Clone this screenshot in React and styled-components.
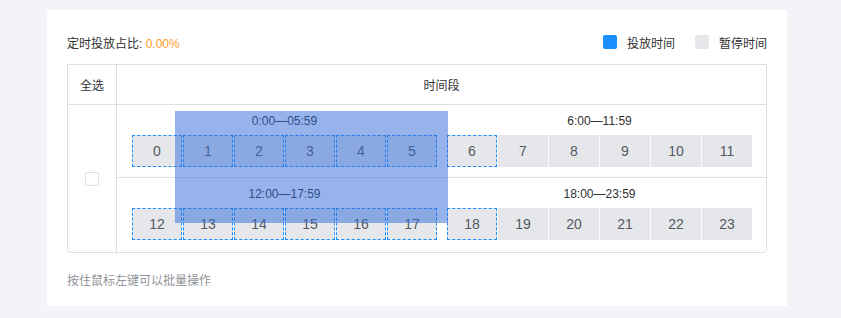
import React from 'react';
import styled, { createGlobalStyle } from 'styled-components';

const GlobalStyle = createGlobalStyle`
  body {
    margin: 0;
    background: #f3f4f8;
    font-family: "Liberation Sans", "Noto Sans CJK SC", sans-serif;
  }
`;

const Card = styled.div`
  box-sizing: border-box;
  width: 740px;
  height: 296px;
  margin: 10px 0 0 47px;
  padding: 20px 20px 15px;
  background: #fff;
`;

const TopBar = styled.div`
  display: flex;
  align-items: center;
  justify-content: space-between;
  height: 24px;
  margin-bottom: 10px;
  font-size: 12px;
  color: #303133;
`;

const Ratio = styled.span`
  color: #ff9a2e;
`;

const Legend = styled.div`
  display: flex;
  align-items: center;
  gap: 20px;
`;

const LegendItem = styled.div`
  display: flex;
  align-items: center;
  gap: 10px;
`;

const Swatch = styled.span`
  width: 14px;
  height: 14px;
  border-radius: 2px;
  background: ${p => (p.$on ? '#1890ff' : '#e6e7eb')};
`;

const Table = styled.div`
  box-sizing: border-box;
  width: 700px;
  border: 1px solid #dcdfe6;
  border-radius: 0 0 4px 4px;
  font-size: 12px;
  color: #303133;
`;

const HeadRow = styled.div`
  display: flex;
  height: 39px;
  border-bottom: 1px solid #dcdfe6;
`;

const FirstCol = styled.div`
  width: 48px;
  flex: none;
  display: flex;
  align-items: center;
  justify-content: center;
  border-right: 1px solid #dcdfe6;
`;

const HeadTitle = styled.div`
  flex: 1;
  display: flex;
  align-items: center;
  justify-content: center;
`;

const BodyRow = styled.div`
  display: flex;
`;

const Checkbox = styled.span`
  box-sizing: border-box;
  width: 14px;
  height: 14px;
  border: 1px solid #dcdfe6;
  border-radius: 2px;
  background: #fff;
`;

const Grid = styled.div`
  position: relative;
  flex: 1;
`;

const HalfDay = styled.div`
  display: flex;
  gap: 10px;
  padding: 6px 15px ${p => (p.$last ? '12px' : '10px')};
  border-bottom: ${p => (p.$last ? 'none' : '1px solid #dcdfe6')};
`;

const Block = styled.div`
  width: 305px;
`;

const BlockLabel = styled.div`
  height: 20px;
  line-height: 20px;
  margin-bottom: 4px;
  text-align: center;
  font-size: 12px;
  color: #303133;
`;

const Cells = styled.div`
  display: flex;
  gap: 1px;
`;

const Cell = styled.div`
  box-sizing: border-box;
  width: 50px;
  height: 32px;
  display: flex;
  align-items: center;
  justify-content: center;
  background: #e6e7eb;
  font-size: 14px;
  color: #555960;
  border: ${p => (p.$hover ? '1px dashed #1890ff' : 'none')};
`;

const Selection = styled.div`
  position: absolute;
  left: 58px;
  top: 6px;
  width: 273px;
  height: 112px;
  background: rgba(45, 105, 215, 0.5);
  pointer-events: none;
`;

const Tip = styled.div`
  margin-top: 18px;
  line-height: 20px;
  font-size: 12px;
  color: #909399;
`;

const blocks = [
  [
    { label: '0:00—05:59', start: 0 },
    { label: '6:00—11:59', start: 6 },
  ],
  [
    { label: '12:00—17:59', start: 12 },
    { label: '18:00—23:59', start: 18 },
  ],
];

const hovered = h => (h >= 0 && h <= 6) || (h >= 12 && h <= 18);

export default function App() {
  return (
    <>
      <GlobalStyle />
      <Card>
        <TopBar>
          <span>
            定时投放占比: <Ratio>0.00%</Ratio>
          </span>
          <Legend>
            <LegendItem>
              <Swatch $on />
              <span>投放时间</span>
            </LegendItem>
            <LegendItem>
              <Swatch />
              <span>暂停时间</span>
            </LegendItem>
          </Legend>
        </TopBar>
        <Table>
          <HeadRow>
            <FirstCol>全选</FirstCol>
            <HeadTitle>时间段</HeadTitle>
          </HeadRow>
          <BodyRow>
            <FirstCol>
              <Checkbox />
            </FirstCol>
            <Grid>
              {blocks.map((row, i) => (
                <HalfDay key={i} $last={i === blocks.length - 1}>
                  {row.map(b => (
                    <Block key={b.start}>
                      <BlockLabel>{b.label}</BlockLabel>
                      <Cells>
                        {Array.from({ length: 6 }, (_, k) => b.start + k).map(h => (
                          <Cell key={h} $hover={hovered(h)}>
                            {h}
                          </Cell>
                        ))}
                      </Cells>
                    </Block>
                  ))}
                </HalfDay>
              ))}
              <Selection />
            </Grid>
          </BodyRow>
        </Table>
        <Tip>按住鼠标左键可以批量操作</Tip>
      </Card>
    </>
  );
}
